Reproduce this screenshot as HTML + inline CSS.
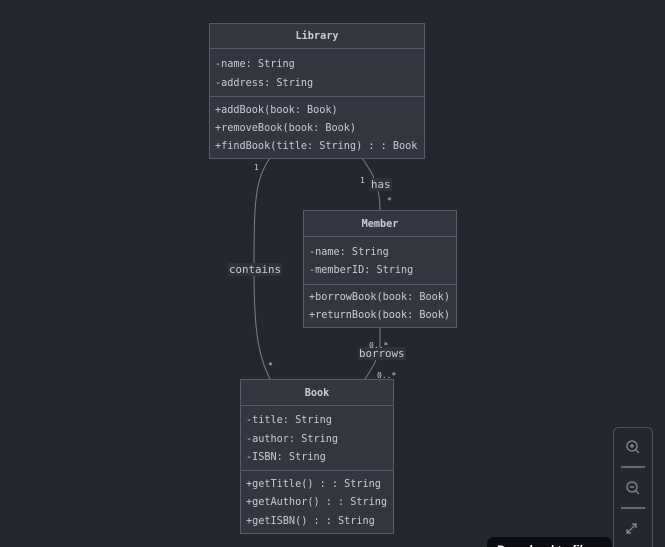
<!DOCTYPE html>
<html style="width:665px;height:547px;overflow:hidden"><head><style>
body{margin:0;width:665px;height:547px;background:#25272e;overflow:hidden;position:relative;font-family:"DejaVu Sans Mono","Liberation Mono",monospace;font-size:10.2px;color:#c9ccd4}
.b{position:absolute;background:#33363f;border:1px solid #575c6c;box-sizing:border-box}
.h{position:absolute;left:0;right:0;top:1px;border-bottom:1px solid #575c6c;text-align:center;font-weight:bold}
.d{position:absolute;left:0;right:0;border-top:1px solid #575c6c}
.t{position:absolute;left:5px;white-space:pre;line-height:12px;margin-top:1px}
.l{position:absolute;white-space:pre;font-size:8px;color:#c9ccd4}
.lab{position:absolute;background:#2f323a;padding:0 1px;line-height:13px;font-size:10.8px}
</style></head><body>
<svg width="665" height="547" style="position:absolute;left:0;top:0" fill="none" stroke="#7a7f8e" stroke-width="1">
<path d="M270 158 C255 180,254 200,254 270 C254 330,258 355,270 379"/>
<path d="M362 158 C372 172,380 185,380 210"/>
<path d="M380 327 L380 345 C378 360,372 368,365 379"/>
</svg>
<div class="b" style="left:209px;top:23px;width:216px;height:136px">
 <div class="h" style="height:23px;line-height:24px">Library</div>
 <div class="d" style="top:72px"></div>
 <div class="t" style="top:34px">-name: String</div>
 <div class="t" style="top:53px">-address: String</div>
 <div class="t" style="top:80px">+addBook(book: Book)</div>
 <div class="t" style="top:98px">+removeBook(book: Book)</div>
 <div class="t" style="top:116px">+findBook(title: String) : : Book</div>
</div>
<div class="b" style="left:303px;top:210px;width:154px;height:118px">
 <div class="h" style="height:24px;line-height:25px">Member</div>
 <div class="d" style="top:73px"></div>
 <div class="t" style="top:35px">-name: String</div>
 <div class="t" style="top:53px">-memberID: String</div>
 <div class="t" style="top:80px">+borrowBook(book: Book)</div>
 <div class="t" style="top:98px">+returnBook(book: Book)</div>
</div>
<div class="b" style="left:240px;top:379px;width:154px;height:155px">
 <div class="h" style="height:24px;line-height:25px">Book</div>
 <div class="d" style="top:90px"></div>
 <div class="t" style="top:34px">-title: String</div>
 <div class="t" style="top:53px">-author: String</div>
 <div class="t" style="top:71px">-ISBN: String</div>
 <div class="t" style="top:98px">+getTitle() : : String</div>
 <div class="t" style="top:116px">+getAuthor() : : String</div>
 <div class="t" style="top:135px">+getISBN() : : String</div>
</div>
<div class="lab" style="left:228px;top:263px">contains</div>
<div class="lab" style="left:370px;top:178px">has</div>
<div class="lab" style="left:358px;top:347px">borrows</div>
<div class="l" style="left:254px;top:163px">1</div>
<div class="l" style="left:360px;top:176px">1</div>
<div class="l" style="left:387px;top:196px">*</div>
<div class="l" style="left:268px;top:361px">*</div>
<div class="l" style="left:369px;top:341px">0..*</div>
<div class="l" style="left:377px;top:371px">0..*</div>
<div style="position:absolute;left:613px;top:427px;width:40px;height:130px;border:1px solid #4e5362;border-radius:6px;box-sizing:border-box">
 <svg width="40" height="130" style="position:absolute;left:-1px;top:-1px" fill="none" stroke="#8a8fa0" stroke-width="1.2">
  <circle cx="19" cy="19" r="5"/><path d="M23 23l3 3M17 19h4M19 17v4"/>
  <path d="M8 40h24"/>
  <circle cx="19" cy="60" r="5"/><path d="M23 64l3 3M17 60h4"/>
  <path d="M8 81h24"/>
  <path d="M14 106l9-9M19 97h4v4M14 102v4h4"/>
 </svg>
</div>
<div style="position:absolute;left:487px;top:537px;width:125px;height:20px;background:#0b0c0f;border-radius:7px;color:#fff;font-family:'Liberation Sans',sans-serif;font-weight:bold;font-size:12px;padding:6px 10px;box-sizing:border-box;white-space:nowrap">Download to file</div>
</body></html>
